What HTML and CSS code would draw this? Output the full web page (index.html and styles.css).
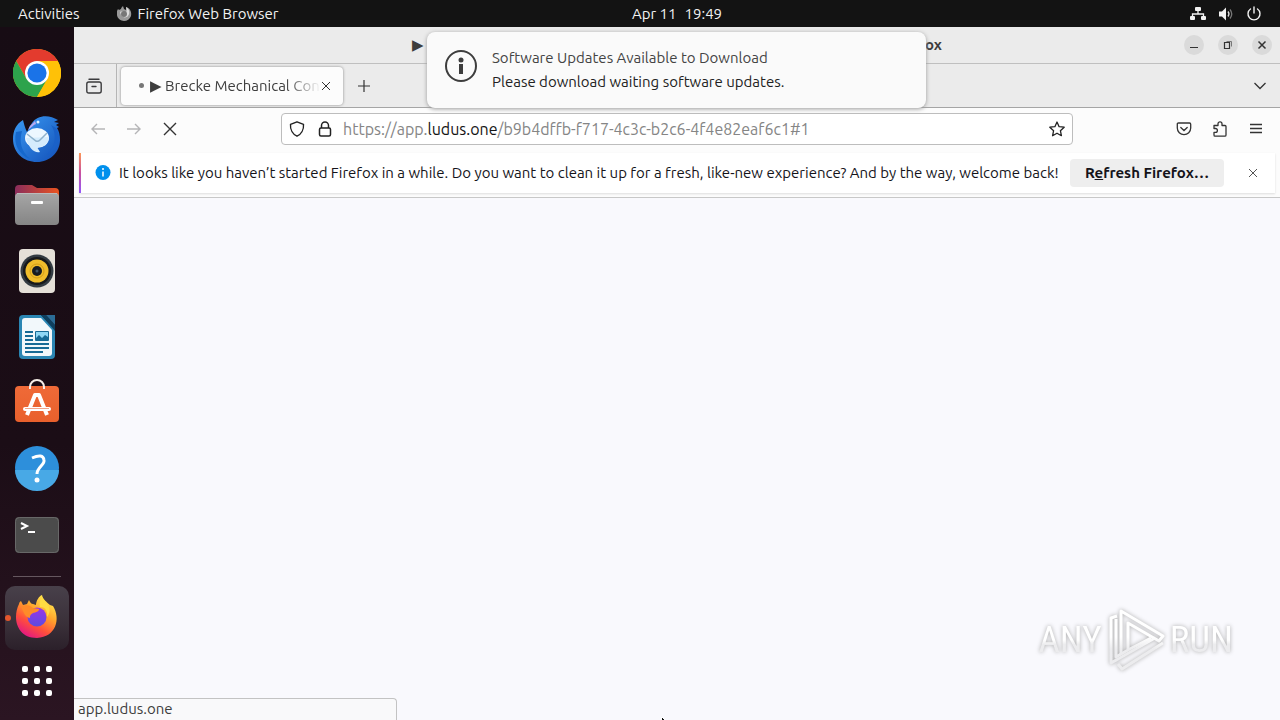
FILE: index.html
```html
<!DOCTYPE html>
<html lang="en">
<head>
  <meta charset="UTF-8">
  <title>Desktop</title>
  <link rel="stylesheet" href="styles.css">
</head>
<body>
  <!-- top bar -->
  <header class="topbar">
    <div class="topbar-left">
      <button class="top-btn">Activities</button>
      <button class="top-btn app-menu">
        <svg width="16" height="16" viewBox="0 0 16 16"><path d="M1 5l1-2 1 1 2-1c0-1 1-2 2-3l1 3 2 1V1c4 1 6 5 5 9-1 3-4 5-7 5S1 12 1 9z" fill="#999"/><path d="M4 6c2-1 4 0 5 1 2-1 2-3 1-6 4 2 4 7 2 9-3 3-7 1-8-4z" fill="#ddd"/><circle cx="8" cy="8" r="3" fill="#777"/></svg>
        Firefox Web Browser
      </button>
    </div>
    <button class="top-btn clock"><span>Apr 11</span><span>19:49</span></button>
    <div class="tray">
      <svg width="16" height="16" viewBox="0 0 16 16" fill="#f2f2f2"><rect x="5" y="1" width="6" height="4" rx="1"/><rect x="0" y="10" width="5" height="4" rx="1"/><rect x="11" y="10" width="5" height="4" rx="1"/><path d="M8 4v4M2.500 11V8h11v3" fill="none" stroke="#f2f2f2" stroke-width="1.300"/></svg>
      <svg width="16" height="16" viewBox="0 0 16 16"><path d="M1 5.500h3L8 1.500v13l-4-4H1z" fill="#f2f2f2"/><path d="M10 5.500q2 2.500 0 5" fill="none" stroke="#ddd" stroke-width="1.300"/><path d="M12 3.500q3.500 4.500 0 9" fill="none" stroke="#777" stroke-width="1.300"/></svg>
      <svg width="16" height="16" viewBox="0 0 16 16" fill="none" stroke="#f2f2f2" stroke-width="1.400" stroke-linecap="round"><path d="M8 1v6M4.500 3a6 6 0 1 0 7 0"/></svg>
    </div>
  </header>

  <div class="desktop">
    <!-- dock -->
    <nav class="dock">
      <button class="dock-item" aria-label="Chrome">
        <svg width="48" height="48" viewBox="0 0 48 48"><circle cx="24" cy="24" r="24" fill="#ffc107"/><path d="M24 24L3.200 12A24 24 0 0 1 44.800 12z" fill="#e33b2e"/><path d="M3.200 12L13.600 30 24 12z" fill="#e33b2e"/><path d="M3.200 12A24 24 0 0 0 24 48L34.400 30H13.600z" fill="#2da34c"/><path d="M24 12h20.800A24 24 0 0 1 24 48l10.400-18z" fill="#ffc107"/><circle cx="24" cy="24" r="12" fill="#fff"/><circle cx="24" cy="24" r="9.600" fill="#1a73e8"/></svg>
      </button>
      <button class="dock-item" aria-label="Thunderbird">
        <svg width="48" height="48" viewBox="0 0 48 48">
          <defs><linearGradient id="tb" x1="0" y1="0" x2="1" y2="1"><stop offset="0" stop-color="#3a9bf4"/><stop offset="1" stop-color="#1350b8"/></linearGradient></defs>
          <path d="M10 5C3 9 0 16 0 24c0 14 11 23 24 23s23-10 23-22c0-5-1-9-3-12l2-1-3-2 3-2-5-1 4-2C36-1 24 0 19 8l-2 3-3 6c-2-4-3-8-4-12z" fill="url(#tb)"/>
          <path d="M17 11l5-5 1 3c-3 1-5 4-8 6z" fill="#b9a9ef"/><circle cx="25" cy="7" r="1.500" fill="#dff3ff"/>
          <path d="M3 17c-3 12 3 23 14 27C8 36 6 27 9 16z" fill="#1668cc"/>
          <path d="M38 10c6 8 5 23-5 30 12-4 16-18 10-27z" fill="#1a61c8"/>
          <ellipse cx="24" cy="23" rx="12" ry="10" fill="#edf7ff"/><path d="M13 23q5 16 14 14l-3-5q11 1 12-10z" fill="#d5ecfd"/><path d="M14 19l9 7q2 1 4-1l7-7" fill="none" stroke="#8fb2cc" stroke-width="1.500"/>
        </svg>
      </button>
      <button class="dock-item" aria-label="Files">
        <svg width="48" height="48" viewBox="0 0 48 48">
          <defs><linearGradient id="fo"><stop offset="0" stop-color="#8a2d5c"/><stop offset="1" stop-color="#ea5420"/></linearGradient><linearGradient id="fg" x1="0" y1="0" x2="0" y2="1"><stop offset="0" stop-color="#a6a6a6"/><stop offset="1" stop-color="#858585"/></linearGradient></defs>
          <path d="M2 8q0-4 4-4h13l5 3h18q4 0 4 4v20H2z" fill="url(#fo)"/><rect x="2" y="12" width="44" height="32" rx="4" fill="url(#fg)"/><path d="M4 12.500h40" stroke="#bbb"/><rect x="18" y="20" width="12" height="3" rx="1" fill="#fff"/>
        </svg>
      </button>
      <button class="dock-item" aria-label="Rhythmbox">
        <svg width="48" height="48" viewBox="0 0 48 48"><rect x="6" y="2" width="36" height="44" rx="4" fill="#e5e0d8"/><circle cx="24" cy="24" r="16.500" fill="#333b42"/><circle cx="24" cy="24" r="14" fill="#17191b"/><circle cx="24" cy="24" r="11.500" fill="#f0bd2b"/><circle cx="24" cy="24" r="7" fill="none" stroke="#d39e18"/><circle cx="24" cy="24" r="5" fill="#171c21"/><circle cx="24" cy="24" r="1.500" fill="#405365"/></svg>
      </button>
      <button class="dock-item" aria-label="LibreOffice Writer">
        <svg width="48" height="48" viewBox="0 0 48 48"><path d="M10 2h18l14 14v26q0 4-4 4H10q-4 0-4-4V6q0-4 4-4z" fill="#2a86b3"/><path d="M12 5h16l11 12v23q0 3-3 3H12q-3 0-3-3V8q0-3 3-3z" fill="#f2f8fb"/><path d="M28 2h5l9 10v6z" fill="#0e3f5e"/><path d="M33 2h9v10z" fill="#2b6c96"/><path d="M12 19h8M12 23h8M12 27h8M12 31h24M12 35h24M12 39h18" stroke="#176b96" stroke-width="2"/><rect x="22" y="18" width="14" height="10" rx="1" fill="#176b96"/><path d="M23 19h12v5l-3-2-3 3-3-3-3 3z" fill="#8ed7f5"/></svg>
      </button>
      <button class="dock-item" aria-label="Ubuntu Software">
        <svg width="48" height="48" viewBox="0 0 48 48"><defs><linearGradient id="so" x1="0" y1="0" x2="0" y2="1"><stop offset="0" stop-color="#ef6a38"/><stop offset="1" stop-color="#e9602c"/></linearGradient></defs><rect x="2" y="7" width="44" height="36" rx="4" fill="url(#so)"/><path d="M17 10V8a7 7 0 0 1 14 0v2" fill="none" stroke="#f6eee8" stroke-width="2"/><path d="M14 36l8-20h4l8 20" fill="none" stroke="#fff" stroke-width="4" stroke-linejoin="round"/><path d="M12 30h24" stroke="#fff" stroke-width="4" stroke-linecap="round"/><path d="M12 29.500h24" stroke="#f2a488"/></svg>
      </button>
      <button class="dock-item" aria-label="Help">
        <svg width="48" height="48" viewBox="0 0 48 48"><circle cx="24" cy="23" r="22" fill="#2d8fdb"/><path d="M2 25a22 21 0 0 0 44 0z" fill="#48a9e6"/><path d="M19 13q11-5 12 2c1 5-7 7-7 14" fill="none" stroke="#fff" stroke-width="3"/><circle cx="24" cy="35" r="2.500" fill="#fff"/></svg>
      </button>
      <button class="dock-item" aria-label="Terminal">
        <svg width="48" height="48" viewBox="0 0 48 48"><rect x="2" y="6" width="44" height="36" rx="4" fill="#4b4b4b"/><rect x="2.500" y="6.500" width="43" height="35" rx="4" fill="none" stroke="#686868"/><path d="M8 12l6 3-6 3M15 21h7" fill="none" stroke="#fff" stroke-width="2"/></svg>
      </button>
      <hr class="dock-line">
      <button class="dock-item active" aria-label="Firefox">
        <svg width="48" height="48" viewBox="0 0 48 48">
          <defs><linearGradient id="ff" x1=".85" y1=".05" x2=".3" y2="1"><stop offset="0" stop-color="#fff052"/><stop offset=".4" stop-color="#ffa22b"/><stop offset=".7" stop-color="#ff4f3b"/><stop offset="1" stop-color="#e31685"/></linearGradient><linearGradient id="fp" x1="0" y1="0" x2="0" y2="1"><stop offset="0" stop-color="#9b35e7"/><stop offset="1" stop-color="#5b4be0"/></linearGradient></defs>
          <path d="M6 10c0-2 2-3 2-3l2 4 4-1 2-4c1 2 2 4 4 4l3 1c0-4 3-9 6-10 1 5 5 7 8 10l3 1c8 13 3 31-16 32C9 44 3 33 3 23c0-5 1-9 3-13z" fill="url(#ff)"/>
          <circle cx="24" cy="23" r="9.500" fill="url(#fp)"/>
          <path d="M8 13c5-3 9-2 12 1l6 1c0 3-3 3-6 4-3 2-3 3-3 5-5-1-6-5-9-11z" fill="#ff8b29"/>
          <path d="M27 13c6 0 8 5 7 10 4-5 3-10 0-13l-5-7c-2 3-3 6-2 10z" fill="#ffdc43"/>
        </svg>
      </button>
      <button class="dock-item apps" aria-label="Show applications">
        <svg width="48" height="48" viewBox="0 0 48 48" fill="#fff"><rect x="9" y="9" width="6" height="6" rx="2"/><rect x="21" y="9" width="6" height="6" rx="2"/><rect x="33" y="9" width="6" height="6" rx="2"/><rect x="9" y="21" width="6" height="6" rx="2"/><rect x="21" y="21" width="6" height="6" rx="2"/><rect x="33" y="21" width="6" height="6" rx="2"/><rect x="9" y="33" width="6" height="6" rx="2"/><rect x="21" y="33" width="6" height="6" rx="2"/><rect x="33" y="33" width="6" height="6" rx="2"/></svg>
      </button>
    </nav>

    <!-- browser window -->
    <main class="window">
      <div class="titlebar">
        <div class="title"><span>▶ Brecke Mechanical</span><span>Mozilla Firefox</span></div>
        <div class="win-buttons">
          <button class="win-btn" aria-label="Minimize"><svg width="16" height="16" viewBox="0 0 16 16"><path d="M4 10.500h8" stroke="#333"/></svg></button>
          <button class="win-btn" aria-label="Restore"><svg width="16" height="16" viewBox="0 0 16 16" fill="none" stroke="#333"><path d="M4.500 5.500h5v6h-5z" stroke-width="1.200"/><path d="M6.500 4.500h5v5" stroke="#777"/></svg></button>
          <button class="win-btn" aria-label="Close"><svg width="16" height="16" viewBox="0 0 16 16"><path d="M4.500 4.500l7 7M11.500 4.500l-7 7" stroke="#333" stroke-width="1.500"/></svg></button>
        </div>
      </div>

      <div class="tabbar">
        <button class="icon-btn view-btn" aria-label="Firefox View"><svg width="16" height="16" viewBox="0 0 16 16" fill="none" stroke="#3b3b3d" stroke-width="1.400" stroke-linecap="round"><path d="M3 1.200h10"/><path d="M.8 7V6q0-2 2-2h10.400q2 0 2 2v7q0 2-2 2H2.800q-2 0-2-2z"/><path d="M6 8.500h4"/></svg></button>
        <div class="tab">
          <span class="tab-dot"></span>
          <span class="tab-label">▶ Brecke Mechanical Con</span>
          <button class="icon-btn" aria-label="Close tab"><svg width="10" height="10" viewBox="0 0 10 10"><path d="M1 1l8 8M9 1L1 9" stroke="#333"/></svg></button>
        </div>
        <button class="icon-btn new-tab" aria-label="New tab"><svg width="12" height="12" viewBox="0 0 12 12"><path d="M6 0v12M0 6h12" stroke="#333" stroke-width="1.200"/></svg></button>
        <button class="icon-btn tabs-list" aria-label="List all tabs"><svg width="14" height="14" viewBox="0 0 14 14"><path d="M1.500 4L7 9.500 12.500 4" fill="none" stroke="#333" stroke-width="1.300"/></svg></button>
      </div>

      <div class="navbar">
        <div class="nav-left">
          <button class="icon-btn" aria-label="Back" disabled><svg width="16" height="16" viewBox="0 0 16 16" fill="none" stroke="#b5b5b7" stroke-width="1.400"><path d="M15 8H2M7 3L2 8l5 5"/></svg></button>
          <button class="icon-btn" aria-label="Forward" disabled><svg width="16" height="16" viewBox="0 0 16 16" fill="none" stroke="#b5b5b7" stroke-width="1.400"><path d="M1 8h13M9 3l5 5-5 5"/></svg></button>
          <button class="icon-btn" aria-label="Stop"><svg width="16" height="16" viewBox="0 0 16 16"><path d="M2 2l12 12M14 2L2 14" stroke="#333" stroke-width="1.400"/></svg></button>
        </div>
        <div class="urlbar">
          <svg width="16" height="16" viewBox="0 0 16 16" fill="none" stroke="#222" stroke-width="1.400"><path d="M8 .8l6.500 2.500C15 9 12 13.500 8 15.200 4 13.500 1 9 1.500 3.300z" stroke-linejoin="round"/></svg>
          <svg width="16" height="16" viewBox="0 0 16 16" fill="none" stroke="#222" stroke-width="1.500"><rect x="2.500" y="7" width="11" height="8" rx="1.500"/><path d="M4.500 7V4.500a3.500 3.500 0 0 1 7 0V7"/></svg>
          <a class="url" href="#1">https://app.<b>ludus.one</b>/b9b4dffb-f717-4c3c-b2c6-4f4e82eaf6c1#1</a>
          <button class="icon-btn" aria-label="Bookmark"><svg width="16" height="16" viewBox="0 0 16 16"><path d="M8 1l2.100 4.700 5.100.5-3.800 3.500 1 5L8 12.200l-4.400 2.500 1-5L.8 6.200l5.100-.5z" fill="none" stroke="#222" stroke-width="1.300" stroke-linejoin="round"/></svg></button>
        </div>
        <div class="nav-right">
          <button class="icon-btn" aria-label="Pocket"><svg width="16" height="16" viewBox="0 0 16 16" fill="none" stroke="#333" stroke-width="1.300" stroke-linecap="round"><path d="M2.500 2h11q1.200 0 1.200 1.200V7a6.700 6.700 0 0 1-13.400 0V3.200Q1.300 2 2.500 2z"/><path d="M4.800 6.500L8 9.500l3.200-3"/></svg></button>
          <button class="icon-btn" aria-label="Extensions"><svg width="16" height="16" viewBox="0 0 16 16" fill="none" stroke="#333" stroke-width="1.300" stroke-linejoin="round"><path d="M2 7.500V4.500h4V2.800a2 2 0 0 1 4 0v1.700h3q1 0 1 1V14q0 1.200-1.200 1.200H3Q2 15.200 2 14v-2.700h1.500a1.900 1.900 0 0 0 0-3.800z"/></svg></button>
          <button class="icon-btn" aria-label="Menu"><svg width="16" height="16" viewBox="0 0 16 16"><path d="M2 3.500h12M2 7.500h12M2 11.500h12" stroke="#333" stroke-width="1.300"/></svg></button>
        </div>
      </div>

      <div class="infobar">
        <svg width="16" height="16" viewBox="0 0 16 16"><circle cx="8" cy="7.500" r="7.500" fill="#0090ed"/><path d="M8 6.500v5" stroke="#fff" stroke-width="1.500"/><circle cx="8" cy="4" r="1" fill="#fff"/></svg>
        <span class="infobar-text">It looks like you haven’t started Firefox in a while. Do you want to clean it up for a fresh, like-new experience? And by the way, welcome back!</span>
        <button class="refresh-btn">R<u>e</u>fresh Firefox…</button>
        <button class="icon-btn infobar-close" aria-label="Close message"><svg width="10" height="10" viewBox="0 0 10 10"><path d="M1 1l8 8M9 1L1 9" stroke="#555"/></svg></button>
      </div>

      <div class="page">
        <div class="watermark">
          <span>ANY</span>
          <svg width="58" height="66" viewBox="0 0 58 66" fill="none" stroke-width="3" stroke-linejoin="round">
            <defs><linearGradient id="wm" gradientUnits="userSpaceOnUse" x1="0" y1="30" x2="0" y2="42"><stop offset="0" stop-color="#fff"/><stop offset="1" stop-color="#ececee"/></linearGradient></defs>
            <g stroke="url(#wm)"><path d="M14 47V4l42 25-4 5-31-18v26"/><path d="M10 9l-6 2v45l44-25"/><path d="M56 36L15 62l-4-5"/><path d="M9 12v38l12-7 23-12"/></g>
          </svg>
          <span>RUN</span>
        </div>
        <div class="status">app.ludus.one</div>
        <svg class="cursor" width="10" height="16" viewBox="0 0 10 16"><path d="M.5.500v13l3-3 2 5 2-1-2-5h4z" fill="#111" stroke="#fff"/></svg>
      </div>
    </main>
  </div>

  <!-- update notification -->
  <section class="notification">
    <svg width="32" height="32" viewBox="0 0 32 32"><circle cx="16" cy="16" r="15" fill="none" stroke="#3d3d3d" stroke-width="2"/><circle cx="16" cy="10" r="2.500" fill="#3d3d3d"/><path d="M16 14v10" stroke="#3d3d3d" stroke-width="4"/></svg>
    <div>
      <div class="notification-title">Software Updates Available to Download</div>
      <div>Please download waiting software updates.</div>
    </div>
  </section>
</body>
</html>
```
FILE: styles.css
```css
* { box-sizing: border-box; }
body {
  margin: 0;
  height: 100vh;
  display: flex;
  flex-direction: column;
  overflow: hidden;
  font-family: Ubuntu, "Noto Sans", "DejaVu Sans", sans-serif;
  font-size: 15px;
  line-height: 20px;
  color: #3d3d3d;
}
button { font: inherit; color: inherit; border: none; background: none; padding: 0; }
svg { display: block; flex-shrink: 0; }

/* top bar, the clock is centered over the area right of the dock */
.topbar {
  height: 27px;
  flex-shrink: 0;
  display: grid;
  grid-template-columns: 74px 1fr auto 1fr;
  align-items: center;
  padding: 0 18px;
  background: #131313;
  color: #f2f2f2;
}
.topbar-left { grid-column: 1 / 3; display: flex; gap: 36px; }
.top-btn { display: flex; align-items: center; gap: 6px; }
.clock { gap: 8px; }
.tray { display: flex; justify-content: flex-end; gap: 12px; }

.desktop { flex: 1; display: flex; min-height: 0; }

/* dock */
.dock {
  width: 74px;
  flex-shrink: 0;
  display: flex;
  flex-direction: column;
  align-items: center;
  gap: 2px;
  padding-top: 14px;
  background: linear-gradient(#170c14, #1b0d16 60%, #2b1522);
}
.dock-item {
  position: relative;
  width: 64px;
  height: 64px;
  flex-shrink: 0;
  display: flex;
  align-items: center;
  justify-content: center;
  border-radius: 10px;
}
.dock-line { width: 48px; margin: 7px 0; border: none; border-top: 1px solid #65575f; }
.active { background: linear-gradient(#48404a, #3a3039 60%, #2b202a); }
.active::before {
  content: "";
  position: absolute;
  left: 0;
  width: 6px;
  height: 6px;
  border-radius: 50%;
  background: #e4562d;
}
.apps { height: 58px; }

/* window */
.window { flex: 1; min-width: 0; display: flex; flex-direction: column; background: #fcfcfc; }
.titlebar {
  position: relative;
  height: 37px;
  flex-shrink: 0;
  display: flex;
  align-items: center;
  justify-content: center;
  background: #ebebeb;
  border-bottom: 1px solid #bfbfbf;
}
.title { width: 530px; display: flex; justify-content: space-between; font-weight: bold; }
.win-buttons { position: absolute; right: 8px; display: flex; gap: 14px; }
.win-btn {
  width: 20px;
  height: 20px;
  display: flex;
  align-items: center;
  justify-content: center;
  border-radius: 50%;
  background: #dadada;
}
.icon-btn { display: flex; align-items: center; justify-content: center; flex-shrink: 0; }

.tabbar {
  height: 44px;
  flex-shrink: 0;
  display: flex;
  align-items: center;
  background: #ebebeb;
  border-bottom: 1px solid #a5a5a5;
}
.view-btn { width: 43px; height: 43px; padding-right: 2px; border-right: 1px solid #b5b5b5; }
.tab {
  width: 222px;
  height: 38px;
  margin-left: 4px;
  padding: 0 12px 0 18px;
  display: flex;
  align-items: center;
  background: #fcfcfc;
  border-radius: 4px;
  box-shadow: 0 0 3px #888;
}
.tab-dot { width: 5px; height: 5px; margin-right: 6px; border-radius: 50%; background: #777; }
.tab-label {
  flex: 1;
  overflow: hidden;
  white-space: nowrap;
  mask-image: linear-gradient(to left, transparent, #000 36px);
}
.new-tab { margin-left: 15px; }
.tabs-list { margin-left: auto; margin-right: 13px; }

.navbar { height: 41px; flex-shrink: 0; display: flex; align-items: center; padding: 0 16px; }
.nav-left { display: flex; gap: 20px; }
.urlbar {
  flex: 1;
  height: 32px;
  margin: 0 103px;
  padding: 0 7px;
  display: flex;
  align-items: center;
  gap: 12px;
  background: #fff;
  border: 1px solid #bdbdbd;
  border-radius: 4px;
  font-size: 16px;
  white-space: nowrap;
}
.url { flex: 1; margin-left: -2px; color: #858585; text-decoration: none; overflow: hidden; }
.url b { font-weight: normal; color: #151515; }
.nav-right { display: flex; gap: 20px; }

.infobar {
  height: 40px;
  flex-shrink: 0;
  margin: 4px 5px;
  padding: 0 17px 0 14px;
  display: flex;
  align-items: center;
  background: #fff;
  border-left: 2px solid;
  border-image: linear-gradient(#ff9a54, #c850a0 50%, #9059ff) 1;
  box-shadow: 0 1px 2px #ddd;
  color: #15141a;
  white-space: nowrap;
}
.infobar-text { flex: 1; min-width: 0; margin-left: 8px; }
.refresh-btn { width: 154px; height: 28px; border-radius: 4px; background: #eee; font-weight: bold; }
.infobar-close { margin-left: 24px; }

.page { position: relative; flex: 1; min-height: 0; background: #f9f9fd; border-top: 1px solid #c8c8c8; }
.status {
  position: absolute;
  left: 0;
  bottom: 0;
  width: 323px;
  height: 22px;
  padding-left: 4px;
  background: #f9f9fa;
  border: 1px solid #c3c3c3;
  border-width: 1px 1px 0 0;
  border-radius: 0 4px 0 0;
}
.cursor { position: absolute; left: 587px; bottom: -12px; }
.watermark {
  position: absolute;
  right: 47px;
  bottom: 47px;
  display: flex;
  align-items: center;
  gap: 5px;
  font-family: "Liberation Sans Narrow", "Roboto Condensed", "Liberation Sans", sans-serif;
  font-size: 37px;
  line-height: 44px;
  filter: drop-shadow(0 0 2px #aaa);
}
.watermark span {
  color: transparent;
  background: linear-gradient(#fff 50%, #ececee 60%);
  background-clip: text;
}

/* notification */
.notification {
  position: absolute;
  top: 32px;
  left: 50%;
  width: 499px;
  height: 76px;
  margin-left: -213px;
  padding: 14px 18px;
  display: flex;
  gap: 15px;
  line-height: 24px;
  background: #fafafa;
  border-radius: 8px;
  box-shadow: 0 1px 4px #999;
  color: #222;
}
.notification svg { margin-top: 4px; }
.notification-title { color: #444; }
```
